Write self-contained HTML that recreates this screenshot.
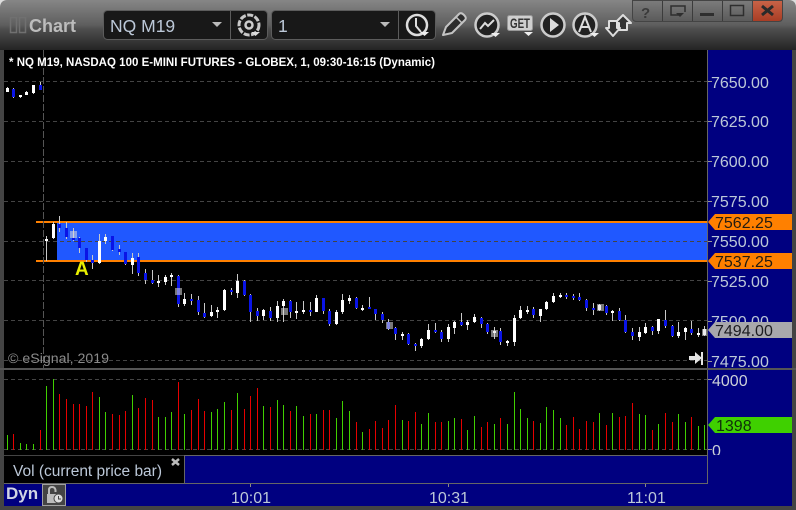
<!DOCTYPE html>
<html><head><meta charset="utf-8"><style>
html,body{margin:0;padding:0;background:#444;width:796px;height:510px;overflow:hidden}
svg{display:block}
text{font-family:"Liberation Sans",sans-serif}
.p{font-size:16px;fill:#bcc8d8}
</style></head><body>
<svg xmlns="http://www.w3.org/2000/svg" width="796" height="510" viewBox="0 0 796 510">
<defs>
<linearGradient id="tb" x1="0" y1="0" x2="0" y2="1"><stop offset="0" stop-color="#868686"/><stop offset=".5" stop-color="#5e5e5e"/><stop offset=".58" stop-color="#4e4e4e"/><stop offset="1" stop-color="#242424"/></linearGradient>
<linearGradient id="bt" x1="0" y1="0" x2="0" y2="1"><stop offset="0" stop-color="#7c7c7c"/><stop offset="1" stop-color="#5a5a5a"/></linearGradient>
<linearGradient id="rd" x1="0" y1="0" x2="0" y2="1"><stop offset="0" stop-color="#c86448"/><stop offset="1" stop-color="#a83c24"/></linearGradient>
<clipPath id="z"><rect x="708" y="370" width="84" height="85"/></clipPath>
</defs>
<rect width="796" height="510" fill="#444"/>
<path d="M0 50V8Q0 0 8 0H788Q796 0 796 8V50Z" fill="url(#tb)"/>
<path d="M0 0H8Q0 0 0 8ZM796 0H788Q796 0 796 8Z" fill="#ddd"/>
<!-- title -->
<rect x="10.500" y="17.500" width="6" height="15" fill="none" stroke="#707070" stroke-width="1.500"/>
<rect x="19.500" y="17.500" width="6" height="15" fill="none" stroke="#707070" stroke-width="1.500"/>
<text x="29" y="32" font-size="18" font-weight="bold" fill="#bcbcbc">Chart</text>
<!-- dropdown 1 -->
<rect x="103.500" y="10.500" width="164" height="29" rx="4" fill="#181818" stroke="#5c5c5c"/>
<path d="M230.500 11V39" stroke="#5c5c5c"/>
<text x="110" y="32" font-size="17.500" fill="#bcc8d8">NQ M19</text>
<path d="M212 22h10l-5 5z" fill="#bbb"/>
<circle cx="249" cy="25" r="10" fill="none" stroke="#c8c8c8" stroke-width="3" stroke-dasharray="6 1.500"/>
<circle cx="249" cy="25" r="3.500" fill="none" stroke="#ccc" stroke-width="2.500"/>
<path d="M251 32h9l-4.500 4z" fill="#ddd"/>
<!-- dropdown 2 -->
<rect x="271.500" y="10.500" width="164" height="29" rx="4" fill="#181818" stroke="#5c5c5c"/>
<path d="M398.500 11V39" stroke="#5c5c5c"/>
<text x="278" y="32" font-size="17.500" fill="#bcc8d8">1</text>
<path d="M380 22h10l-5 5z" fill="#bbb"/>
<circle cx="417" cy="25" r="10" fill="none" stroke="#ddd" stroke-width="2.500"/>
<path d="M416 18V26L421 32" fill="none" stroke="#ddd" stroke-width="2"/>
<path d="M420 32h9l-4.500 4z" fill="#eee"/>
<!-- pencil -->
<path d="M443 35L446 27L459 14Q461 12 464 15Q467 18 465 20L452 33z" fill="#2c2c2c" stroke="#c4c4c4" stroke-width="2" stroke-linejoin="round"/>
<path d="M456 17L462 23" stroke="#c4c4c4" stroke-width="1.500"/>
<!-- wave -->
<circle cx="487" cy="25" r="11.500" fill="#222" stroke="#ccc" stroke-width="2.500"/>
<path d="M480 29L485 23L488 26L494 20" fill="none" stroke="#ddd" stroke-width="2"/>
<path d="M491 33h9l-4.500 4z" fill="#eee"/>
<!-- GET -->
<rect x="507.500" y="15.500" width="25" height="15" rx="2" fill="#cfcfcf" stroke="#999"/>
<text x="510" y="28" font-size="14" font-weight="bold" fill="#333" textLength="20" lengthAdjust="spacingAndGlyphs">GET</text>
<path d="M524 32h9l-4.500 4z" fill="#eee"/>
<!-- play -->
<circle cx="553" cy="25" r="11.500" fill="#222" stroke="#ccc" stroke-width="2.500"/>
<path d="M550 18L559 25L550 32z" fill="#ddd"/>
<!-- A -->
<circle cx="585" cy="25" r="11.500" fill="#222" stroke="#ccc" stroke-width="2.500"/>
<path d="M579 32L585 17L591 32M581 27H589" fill="none" stroke="#ddd" stroke-width="2"/>
<path d="M590 33h9l-4.500 4z" fill="#eee"/>
<!-- arrows -->
<path d="M623 15L631 23H627V30H619V23H615Z" fill="#333" stroke="#ddd" stroke-width="2" stroke-linejoin="round"/>
<path d="M613 36L606 28H609V21H617V28H620Z" fill="#333" stroke="#ddd" stroke-width="2" stroke-linejoin="round"/>
<!-- window buttons -->
<path d="M632.500 0.500H752.500V21.500H636.500Q632.500 21.500 632.500 17.500Z" fill="url(#bt)" stroke="#444"/>
<path d="M752.500 0.500H782.500V17.500Q782.500 21.500 778.500 21.500H752.500Z" fill="url(#rd)" stroke="#444"/>
<path d="M662.500 1V21M692.500 1V21M722.500 1V21" stroke="#3c3c3c"/>
<text x="641" y="18" font-size="15" font-weight="bold" fill="#3a3a3a">?</text>
<path d="M679 15H671V6H685V12" fill="none" stroke="#2e2e2e" stroke-width="1.500"/>
<path d="M676 13h8l-4 4z" fill="#2e2e2e"/>
<rect x="700" y="13" width="14" height="3" fill="#2e2e2e"/>
<rect x="730.500" y="5.500" width="13" height="10" fill="none" stroke="#2e2e2e" stroke-width="1.500"/>
<path d="M762 6L773 15M773 6L762 15" stroke="#2a2a2a" stroke-width="3"/>
<!-- panels -->
<rect x="4" y="50" width="703" height="318" fill="#000"/>
<rect x="708" y="50" width="84" height="456" fill="#000080"/>
<rect x="36" y="221" width="671" height="2" fill="#ff8000"/>
<rect x="36" y="260" width="671" height="2" fill="#ff8000"/>
<rect x="57" y="223" width="650" height="37" fill="#2058ff"/>
<path d="M4 81.500H707M4 121.500H707M4 161.500H707M4 201.500H707M4 241.500H707M4 280.500H707M4 320.500H707M4 360.500H707" stroke="#444" stroke-dasharray="4 3"/>
<path d="M43.500 50V368" stroke="#555" stroke-dasharray="7 2"/>
<!-- wicks -->
<path fill="none" stroke="#c8c8c8" d="M7.500 87V92M13.500 88V98M20.500 95V98M26.500 91V95M33.500 85V94M40.500 82V90M46.500 236V261M53.500 222V239M59.500 216V232M66.500 222V239M73.500 228V241M79.500 237V253M86.500 248V262M92.500 255V269M99.500 234V264M105.500 234V244M112.500 236V251M119.500 245V255M125.500 252V265M132.500 253V274M138.500 253V276M145.500 269V284M152.500 270V284M158.500 275V287M165.500 275V285M171.500 273V286M178.500 275V307M184.500 293V306M191.500 294V305M198.500 296V315M204.500 303V318M211.500 305V317M217.500 307V318M224.500 289V311M231.500 288V295M237.500 274V298M244.500 280V296M250.500 294V322M257.500 308V321M263.500 309V320M270.500 307V321M277.500 301V322M283.500 299V322M290.500 300V318M296.500 302V319M303.500 301V314M310.500 302V316M316.500 295V312M323.500 298V314M329.500 309V326M336.500 310V325M342.500 294V314M349.500 295V304M356.500 297V309M362.500 305V311M369.500 297V309M375.500 309V320M382.500 312V323M388.500 319V330M395.500 327V340M402.500 332V340M408.500 333V345M415.500 343V351M421.500 338V348M428.500 324V340M435.500 323V333M441.500 330V342M448.500 324V342M454.500 321V334M461.500 313V326M467.500 320V330M474.500 314V323M481.500 317V328M487.500 323V334M494.500 327V339M500.500 328V345M507.500 340V346M514.500 315V346M520.500 306V319M527.500 306V314M533.500 307V318M540.500 309V322M546.500 301V310M553.500 293V303M560.500 293V298M566.500 293V299M573.500 294V300M579.500 293V301M586.500 299V311M593.500 303V315M599.500 304V311M606.500 305V315M612.500 310V321M619.500 308V321M625.500 315V333M632.500 328V340M639.500 327V341M645.500 323V334M652.500 326V335M658.500 319V334M665.500 310V328M672.500 325V337M678.500 322V338M685.500 327V340M691.500 321V335M698.500 328V337M704.500 326V336"/>
<!-- white bodies -->
<path fill="none" stroke="#fff" stroke-width="3" d="M7.500 88V92M20.500 95V97M26.500 92V95M33.500 85V93M46.500 239V241M53.500 224V238M99.500 241V263M105.500 237V241M132.500 258V265M158.500 281V283M165.500 277V282M171.500 275V277M184.500 299V304M211.500 312V316M217.500 310V312M224.500 290V310M237.500 281V293M263.500 310V316M277.500 306V318M283.500 301V306M296.500 311V313M303.500 310V312M316.500 298V312M336.500 312V324M342.500 300V312M349.500 298V301M362.500 308V310M402.500 334V336M421.500 339V346M428.500 330V339M448.500 327V339M454.500 322V328M467.500 322V325M474.500 317V322M494.500 331V333M507.500 341V343M514.500 318V342M520.500 310V318M527.500 310V312M540.500 309V316M546.500 302V309M553.500 296V302M560.500 295V297M599.500 305V310M612.500 311V313M639.500 332V337M645.500 327V333M658.500 319V331M678.500 332V336M685.500 328V332M698.500 333V335M704.500 329V335"/>
<!-- blue bodies -->
<path fill="none" stroke="#0a14e6" stroke-width="3" d="M13.500 89V97M40.500 85V90M59.500 224V228M66.500 228V237M73.500 238V240M79.500 238V248M86.500 248V260M92.500 260V263M112.500 236V250M119.500 249V252M125.500 252V264M138.500 257V273M145.500 273V280M152.500 280V283M178.500 276V304M191.500 299V301M198.500 300V312M204.500 313V317M231.500 290V292M244.500 281V295M250.500 295V312M257.500 311V316M270.500 311V318M290.500 301V312M310.500 310V312M323.500 298V311M329.500 311V324M356.500 298V308M369.500 307V309M375.500 309V314M382.500 314V320M388.500 322V329M395.500 328V334M408.500 334V344M415.500 344V346M435.500 330V332M441.500 332V339M461.500 322V325M481.500 318V324M487.500 324V332M500.500 331V342M533.500 309V315M566.500 295V297M573.500 296V298M579.500 297V300M586.500 300V308M593.500 308V310M606.500 306V313M619.500 311V320M625.500 320V332M632.500 332V336M652.500 327V331M665.500 320V326M672.500 326V336M691.500 329V333"/>
<!-- squares -->
<g fill="#ddd" fill-opacity=".55"><rect x="70" y="231" width="7" height="7"/><rect x="175" y="288" width="7" height="7"/><rect x="281" y="308" width="7" height="7"/><rect x="386" y="322" width="7" height="7"/><rect x="491" y="330" width="7" height="7"/><rect x="597" y="304" width="7" height="7"/><rect x="702" y="329" width="5" height="7"/></g>
<text x="9" y="66" font-size="11.500" font-weight="bold" fill="#fff" textLength="426">* NQ M19, NASDAQ 100 E-MINI FUTURES - GLOBEX, 1, 09:30-16:15 (Dynamic)</text>
<text x="75" y="275" font-size="19" font-weight="bold" fill="#e8f000">A</text>
<text x="8" y="363" font-size="13.500" fill="#8a8a8a" textLength="101" lengthAdjust="spacingAndGlyphs">© eSignal, 2019</text>
<path d="M689 356H695V352L702 358L695 364V360H689Z" fill="#e4e4e4"/>
<rect x="701" y="352" width="2" height="13" fill="#e4e4e4"/>
<!-- axis -->
<path d="M707.500 50V483" stroke="#666"/>
<path d="M708 81.500H712M708 121.500H712M708 161.500H712M708 201.500H712M708 241.500H712M708 281.500H712M708 321.500H712M708 361.500H712M708 379.500H712M708 449.500H712" stroke="#999"/>
<text class="p" x="711" y="88">7650.00</text>
<text class="p" x="711" y="127">7625.00</text>
<text class="p" x="711" y="167">7600.00</text>
<text class="p" x="711" y="207">7575.00</text>
<text class="p" x="711" y="247">7550.00</text>
<text class="p" x="711" y="287">7525.00</text>
<text class="p" x="711" y="327">7500.00</text>
<text class="p" x="711" y="367">7475.00</text>
<path d="M708 222L715 214H792V230H715Z" fill="#ff8000"/>
<path d="M708 261L715 253H792V269H715Z" fill="#ff8000"/>
<path d="M708 330L715 322H792V338H715Z" fill="#a8a8ac"/>
<text x="715" y="228" font-size="16" fill="#241c10">7562.25</text>
<text x="715" y="267" font-size="16" fill="#241c10">7537.25</text>
<text x="715" y="336" font-size="16" fill="#1c1c20">7494.00</text>
<rect x="0" y="368" width="796" height="2" fill="#555"/>
<!-- volume -->
<rect x="4" y="370" width="703" height="85" fill="#000"/>
<path d="M4 379.500H707M4 449.500H707" stroke="#444" stroke-dasharray="4 3"/>
<path fill="none" stroke="#40d000" d="M7.500 435V450M20.500 443V450M26.500 444V450M33.500 444V450M46.500 386V450M53.500 379V450M99.500 397V450M105.500 412V450M132.500 395V450M158.500 417V450M165.500 417V450M171.500 412V450M184.500 414V450M211.500 412V450M217.500 409V450M224.500 402V450M237.500 393V450M263.500 406V450M277.500 400V450M283.500 405V450M296.500 406V450M303.500 416V450M316.500 414V450M336.500 418V450M342.500 401V450M349.500 411V450M362.500 432V450M402.500 420V450M421.500 424V450M428.500 413V450M448.500 421V450M454.500 418V450M467.500 430V450M474.500 416V450M494.500 424V450M507.500 424V450M514.500 392V450M520.500 409V450M527.500 418V450M540.500 423V450M546.500 407V450M553.500 410V450M560.500 418V450M599.500 413V450M612.500 413V450M639.500 414V450M645.500 415V450M658.500 424V450M678.500 414V450M685.500 422V450M698.500 426V450M704.500 425V450"/>
<path fill="none" stroke="#e60000" d="M13.500 434V450M40.500 430V450M59.500 394V450M66.500 399V450M73.500 404V450M79.500 404V450M86.500 406V450M92.500 392V450M112.500 414V450M119.500 415V450M125.500 411V450M138.500 408V450M145.500 398V450M152.500 400V450M178.500 382V450M191.500 410V450M198.500 399V450M204.500 411V450M231.500 410V450M244.500 409V450M250.500 396V450M257.500 388V450M270.500 407V450M290.500 411V450M310.500 414V450M323.500 410V450M329.500 410V450M356.500 422V450M369.500 429V450M375.500 421V450M382.500 428V450M388.500 420V450M395.500 405V450M408.500 421V450M415.500 412V450M435.500 422V450M441.500 422V450M461.500 419V450M481.500 427V450M487.500 422V450M500.500 418V450M533.500 421V450M566.500 425V450M573.500 417V450M579.500 429V450M586.500 421V450M593.500 422V450M606.500 425V450M619.500 417V450M625.500 416V450M632.500 403V450M652.500 430V450M665.500 413V450M672.500 422V450M691.500 417V450"/>
<path d="M708 425L715 417H792V433H715Z" fill="#3fd000"/>
<text x="716" y="431" font-size="16" fill="#10300a">1398</text>
<text class="p" x="712" y="386" style="fill:#ccd0d8">4000</text>
<g clip-path="url(#z)"><text class="p" x="712" y="456" style="fill:#ccd0d8">0</text></g>
<!-- lower bands -->
<rect x="4" y="456" width="180" height="27" fill="#000"/>
<rect x="184" y="456" width="523" height="27" fill="#000080"/>
<path d="M184 455.500H707M184.500 455V483M4 483.500H708" stroke="#666"/>
<text x="13" y="476" font-size="15.500" fill="#bcc8d8" textLength="149" lengthAdjust="spacingAndGlyphs">Vol (current price bar)</text>
<path d="M172 459L179 465M179 459L172 465" stroke="#bbb" stroke-width="2.500"/>
<rect x="4" y="484" width="704" height="22" fill="#000080"/>
<path d="M250.500 484V487M448.500 484V487M645.500 484V487" stroke="#888"/>
<text x="6" y="499" font-size="17" font-weight="bold" fill="#d0d4e4">Dyn</text>
<rect x="42.500" y="484.500" width="23" height="21" fill="#444" stroke="#a0a0a0"/>
<path d="M47 494H57V503H47Z" fill="#bbb"/>
<path d="M49 494V490Q49 487 52 487Q55 487 55.500 490V492" fill="none" stroke="#bbb" stroke-width="2"/>
<circle cx="58.500" cy="498.500" r="4.500" fill="#ddd" stroke="#444"/>
<path d="M58.500 496V499H61" fill="none" stroke="#444"/>
<text x="231" y="503" font-size="16" fill="#bcc8d8">10:01</text>
<text x="429" y="503" font-size="16" fill="#bcc8d8">10:31</text>
<text x="627" y="503" font-size="16" fill="#bcc8d8">11:01</text>
</svg>
</body></html>
